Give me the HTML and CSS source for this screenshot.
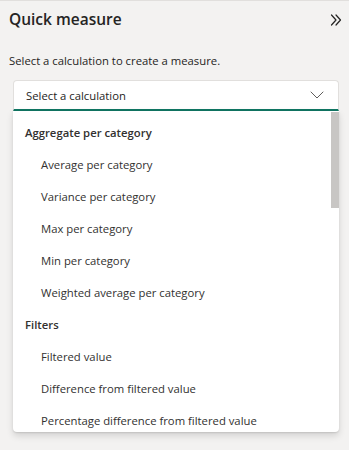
FILE: index.html
```html
<!DOCTYPE html>
<html lang="en">
<head>
<meta charset="utf-8">
<title>Quick measure</title>
<link rel="stylesheet" href="styles.css">
</head>
<body>
<div class="panel">
  <div class="header">
    <h1 class="title">Quick measure</h1>
    <button class="collapse" aria-label="Collapse">
      <svg width="12" height="12" viewBox="0 0 12 12" fill="none" stroke="#252423" stroke-width="1.2" stroke-linecap="round" stroke-linejoin="round">
        <path d="M1.5 1L6 6L1.5 11"/>
        <path d="M6 1L10.5 6L6 11"/>
      </svg>
    </button>
  </div>
  <p class="desc">Select a calculation to create a measure.</p>
  <div class="combo">
    <div class="select">
      <span class="placeholder">Select a calculation</span>
      <svg class="caret" width="14" height="8" viewBox="0 0 14 8" fill="none" stroke="#605e5c" stroke-width="1" stroke-linecap="round" stroke-linejoin="round">
        <path d="M1 1L7 7L13 1"/>
      </svg>
    </div>
    <div class="list">
      <div class="group">Aggregate per category</div>
      <div class="item">Average per category</div>
      <div class="item">Variance per category</div>
      <div class="item">Max per category</div>
      <div class="item">Min per category</div>
      <div class="item">Weighted average per category</div>
      <div class="group">Filters</div>
      <div class="item">Filtered value</div>
      <div class="item">Difference from filtered value</div>
      <div class="item">Percentage difference from filtered value</div>
      <div class="thumb"></div>
    </div>
  </div>
</div>
</body>
</html>
```

FILE: styles.css
```css
* { box-sizing: border-box; }
html, body {
  margin: 0;
  padding: 0;
}
body {
  width: 349px;
  height: 450px;
  overflow: hidden;
  background: #f3f2f1;
  font-family: "Segoe UI", "Open Sans", sans-serif;
  color: #252423;
}
.panel {
  height: 450px;
  border-top: 1px solid #e1dfdd;
  display: flex;
  flex-direction: column;
}
.header {
  display: flex;
  align-items: center;
  justify-content: space-between;
  padding: 0 7px 0 9px;
  height: 35px;
}
.title {
  margin: 0;
  font-size: 15.5px;
  font-weight: 600;
  line-height: 22px;
  color: #252423;
}
.collapse {
  border: 0;
  background: transparent;
  padding: 0;
  margin-top: 2px;
  width: 12px;
  height: 12px;
  display: flex;
}
.desc {
  margin: 17px 0 0 9px;
  font-size: 11.3px;
  line-height: 16px;
  color: #252423;
}
.combo {
  margin: 11px 10px 0 13px;
  display: flex;
  flex-direction: column;
}
.select {
  height: 31px;
  background: #fff;
  border: 1px solid #e1dfdd;
  border-bottom: 2px solid #117865;
  border-radius: 4px 4px 0 0;
  display: flex;
  align-items: center;
  justify-content: space-between;
  padding: 0 14px 0 12px;
}
.placeholder {
  font-size: 11.3px;
  color: #252423;
}
.list {
  position: relative;
  height: 321px;
  background: #fff;
  border-radius: 0 0 4px 4px;
  box-shadow: 0 3.2px 7.2px rgba(0,0,0,0.13), 0 0.6px 1.8px rgba(0,0,0,0.11);
  overflow: hidden;
  padding-top: 5px;
}
.thumb {
  position: absolute;
  top: 1px;
  right: 0;
  width: 8px;
  height: 96px;
  background: #c8c6c4;
}
.group, .item {
  height: 32px;
  display: flex;
  align-items: center;
  font-size: 11.3px;
  color: #323130;
  white-space: nowrap;
}
.group {
  padding-left: 12px;
  font-weight: 600;
}
.item {
  padding-left: 28px;
}
```
